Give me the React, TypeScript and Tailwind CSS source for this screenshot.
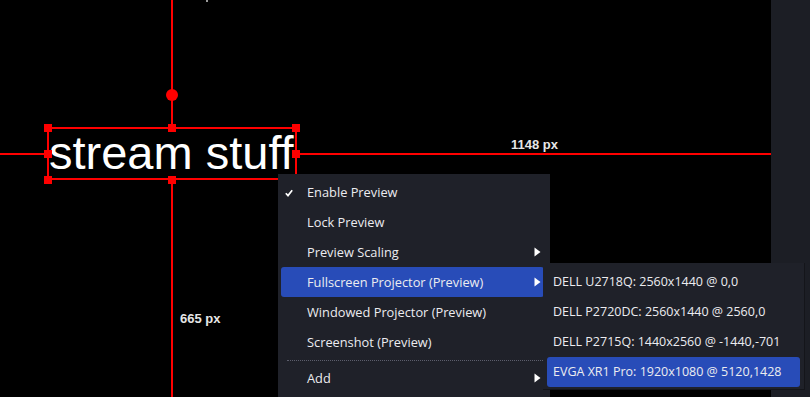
import React from "react";

type Item = {
  label: string;
  checked?: boolean;
  submenu?: boolean;
  active?: boolean;
};

const previewItems: Item[] = [
  { label: "Enable Preview", checked: true },
  { label: "Lock Preview" },
  { label: "Preview Scaling", submenu: true },
  { label: "Fullscreen Projector (Preview)", submenu: true, active: true },
  { label: "Windowed Projector (Preview)" },
  { label: "Screenshot (Preview)" },
];

const monitors = [
  "DELL U2718Q: 2560x1440 @ 0,0",
  "DELL P2720DC: 2560x1440 @ 2560,0",
  "DELL P2715Q: 1440x2560 @ -1440,-701",
  "EVGA XR1 Pro: 1920x1080 @ 5120,1428",
];

const Arrow = () => (
  <svg width="7" height="10" viewBox="0 0 7 10" className="ml-auto mr-[3px]">
    <path d="M0.5 0.5 L6.5 5 L0.5 9.5 Z" fill="#ffffff" />
  </svg>
);

const Check = () => (
  <svg
    width="8"
    height="8"
    viewBox="0 0 8 8"
    className="absolute left-[4px] top-[12px]"
  >
    <path
      d="M0.8 4.2 L3 6.6 L7.2 1.2"
      fill="none"
      stroke="#ffffff"
      strokeWidth="1.7"
    />
  </svg>
);

const MenuRow = ({ item }: { item: Item }) => {
  return (
    <div
      className={`relative flex flex-row items-center h-[30px] pl-[26px] rounded-[3px] ${
        item.active ? "bg-[#284cb8]" : ""
      }`}
    >
      {item.checked && <Check />}
      <span className="text-[#ececf0] text-[12.8px] leading-none">{item.label}</span>
      {item.submenu && <Arrow />}
    </div>
  );
};

const Handle = () => <div className="w-[8px] h-[8px] bg-[#ff0000]" />;

const App = () => {
  return (
    <div
      className="relative flex flex-row w-[810px] h-[397px] overflow-hidden bg-black"
      style={{ fontFamily: '"Open Sans", "Noto Sans", sans-serif' }}
    >
      {/* preview canvas */}
      <div className="relative flex-1 h-full bg-black overflow-hidden">
        {/* guide lines */}
        <div className="absolute left-[171px] top-0 w-[2px] h-[397px] bg-[#ff0000]" />
        <div className="absolute left-0 top-[153px] w-[771px] h-[2px] bg-[#ff0000]" />
        <div className="absolute left-[206px] top-0 w-[2px] h-[2px] bg-[#9a9a9a]" />

        {/* rotation handle */}
        <div className="absolute left-[166px] top-[89px] w-[12px] h-[12px] rounded-full bg-[#ff0000]" />

        {/* selected text source with its handles */}
        <div className="absolute left-[44px] top-[124px] w-[256px] h-[60px] flex flex-col justify-between">
          <div className="absolute left-[3px] top-[3px] w-[250px] h-[53px] border-2 border-[#ff0000] bg-black">
            <p
              className="text-white text-[47px] leading-none whitespace-nowrap"
              style={{ fontFamily: '"Liberation Sans", Arial, sans-serif' }}
            >
              stream stuff
            </p>
          </div>
          <div className="relative flex flex-row justify-between">
            <Handle />
            <Handle />
            <Handle />
          </div>
          <div className="relative flex flex-row justify-between">
            <Handle />
            <Handle />
          </div>
          <div className="relative flex flex-row justify-between">
            <Handle />
            <Handle />
            <Handle />
          </div>
        </div>

        {/* distance labels */}
        <div
          className="absolute left-[511px] top-[138px] text-[13px] font-bold leading-none text-[#e6e6e6]"
          style={{ fontFamily: '"Liberation Sans", Arial, sans-serif' }}
        >
          1148 px
        </div>
        <div
          className="absolute left-[180px] top-[312px] text-[13px] font-bold leading-none text-[#e6e6e6]"
          style={{ fontFamily: '"Liberation Sans", Arial, sans-serif' }}
        >
          665 px
        </div>
      </div>

      {/* right dock */}
      <div className="w-[39px] h-full bg-[#1c1e25]" />

      {/* context menu */}
      <div className="absolute left-[278px] top-[174px] w-[272px] h-[240px] bg-[#1f2129] flex flex-col pt-[3px] pl-[3px] pr-[6px]">
        {previewItems.map((item) => (
          <MenuRow key={item.label} item={item} />
        ))}
        <div className="flex items-center h-[6px] pl-[6px] pr-[1px]">
          <div className="w-full border-t border-dotted border-[#5c5e6c]" />
        </div>
        <MenuRow item={{ label: "Add", submenu: true }} />
      </div>

      {/* projector submenu */}
      <div className="absolute left-[543px] top-[263px] w-[262px] h-[127px] bg-[#1f2129] border-r border-b border-[#14151a] flex flex-col pt-[4px] pl-[4px] pr-[4px]">
        {monitors.map((m, i) => (
          <div
            key={m}
            className={`flex flex-row items-center h-[30px] pl-[6px] rounded-[3px] ${
              i === 3 ? "bg-[#284cb8]" : ""
            }`}
          >
            <span className="text-[#ececf0] text-[12.5px] leading-none whitespace-nowrap">{m}</span>
          </div>
        ))}
      </div>
    </div>
  );
};

export default App;
